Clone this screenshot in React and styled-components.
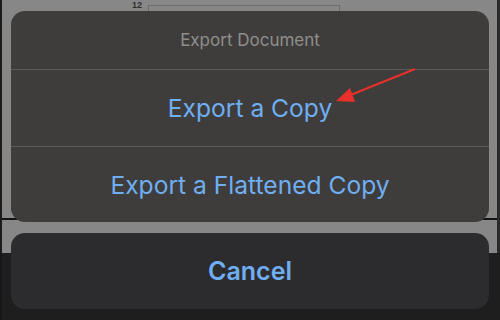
import React from "react";
import styled, { createGlobalStyle } from "styled-components";

const GlobalStyle = createGlobalStyle`
  html, body {
    margin: 0;
    padding: 0;
    background: #1e1e1e;
  }
  body {
    font-family: Inter, "Liberation Sans", sans-serif;
  }
`;

const Screen = styled.div`
  position: relative;
  width: 500px;
  height: 320px;
  overflow: hidden;
  display: flex;
  flex-direction: column;
`;

// dimmed document behind the action sheet
const Page = styled.div`
  height: 253px;
  display: flex;
  flex-direction: column;
  border-left: 2px solid #1b1b1b;
  border-right: 3px solid #2a2a2a;
`;

const Paper = styled.div`
  background: #878787;
  height: ${(props) => props.height || "auto"};
  flex: ${(props) => (props.height ? "none" : 1)};
`;

const PageGap = styled.div`
  height: 2px;
  background: #141414;
`;

const Ruler = styled.div`
  display: flex;
  align-items: flex-start;
  gap: 6px;
  padding-left: 130px;
`;

const RulerLabel = styled.span`
  font-family: "Liberation Sans", sans-serif;
  font-size: 9px;
  font-weight: 700;
  line-height: 10px;
  color: #2f2f2f;
`;

const RulerBox = styled.div`
  margin-top: 5px;
  width: 190px;
  height: 8px;
  border: 1px solid #6c6c6c;
  border-bottom: none;
`;

const Toolbar = styled.div`
  flex: 1;
  background: #1e1e1e;
  border-left: 2px solid #161616;
`;

const Sheet = styled.div`
  position: absolute;
  top: 11px;
  left: 11px;
  right: 11px;
  display: flex;
  flex-direction: column;
  gap: 11px;
`;

const Group = styled.div`
  background: ${(props) => props.bg || "#3e3d3c"};
  border-radius: 14px;
  overflow: hidden;
  display: flex;
  flex-direction: column;
`;

const Title = styled.div`
  height: 58px;
  display: flex;
  align-items: center;
  justify-content: center;
  font-size: 17px;
  color: #8f8e8d;
`;

const Action = styled.div`
  height: ${(props) => props.h || 76}px;
  display: flex;
  align-items: center;
  justify-content: center;
  border-top: ${(props) => (props.first ? "none" : "1px solid #5c5b5a")};
  font-size: ${(props) => (props.bold ? 25 : 24.6)}px;
  font-weight: ${(props) => (props.bold ? 600 : 400)};
  color: #70aef2;
`;

const Annotation = styled.svg`
  position: absolute;
  top: 0;
  left: 0;
  pointer-events: none;
`;

export default function App() {
  return (
    <>
      <GlobalStyle />
      <Screen>
        <Page>
          <Paper height="218px">
            <Ruler>
              <RulerLabel>12</RulerLabel>
              <RulerBox />
            </Ruler>
          </Paper>
          <PageGap />
          <Paper />
        </Page>
        <Toolbar />

        <Sheet>
          <Group>
            <Title>Export Document</Title>
            <Action>Export a Copy</Action>
            <Action h={75}>Export a Flattened Copy</Action>
          </Group>
          <Group bg="#2c2c2e">
            <Action first bold>
              Cancel
            </Action>
          </Group>
        </Sheet>

        <Annotation width="500" height="320" viewBox="0 0 500 320">
          <line x1="415" y1="69" x2="348" y2="96" stroke="#e8302a" strokeWidth="2" />
          <polygon points="336,101 350,88 355,102" fill="#e8302a" />
        </Annotation>
      </Screen>
    </>
  );
}
